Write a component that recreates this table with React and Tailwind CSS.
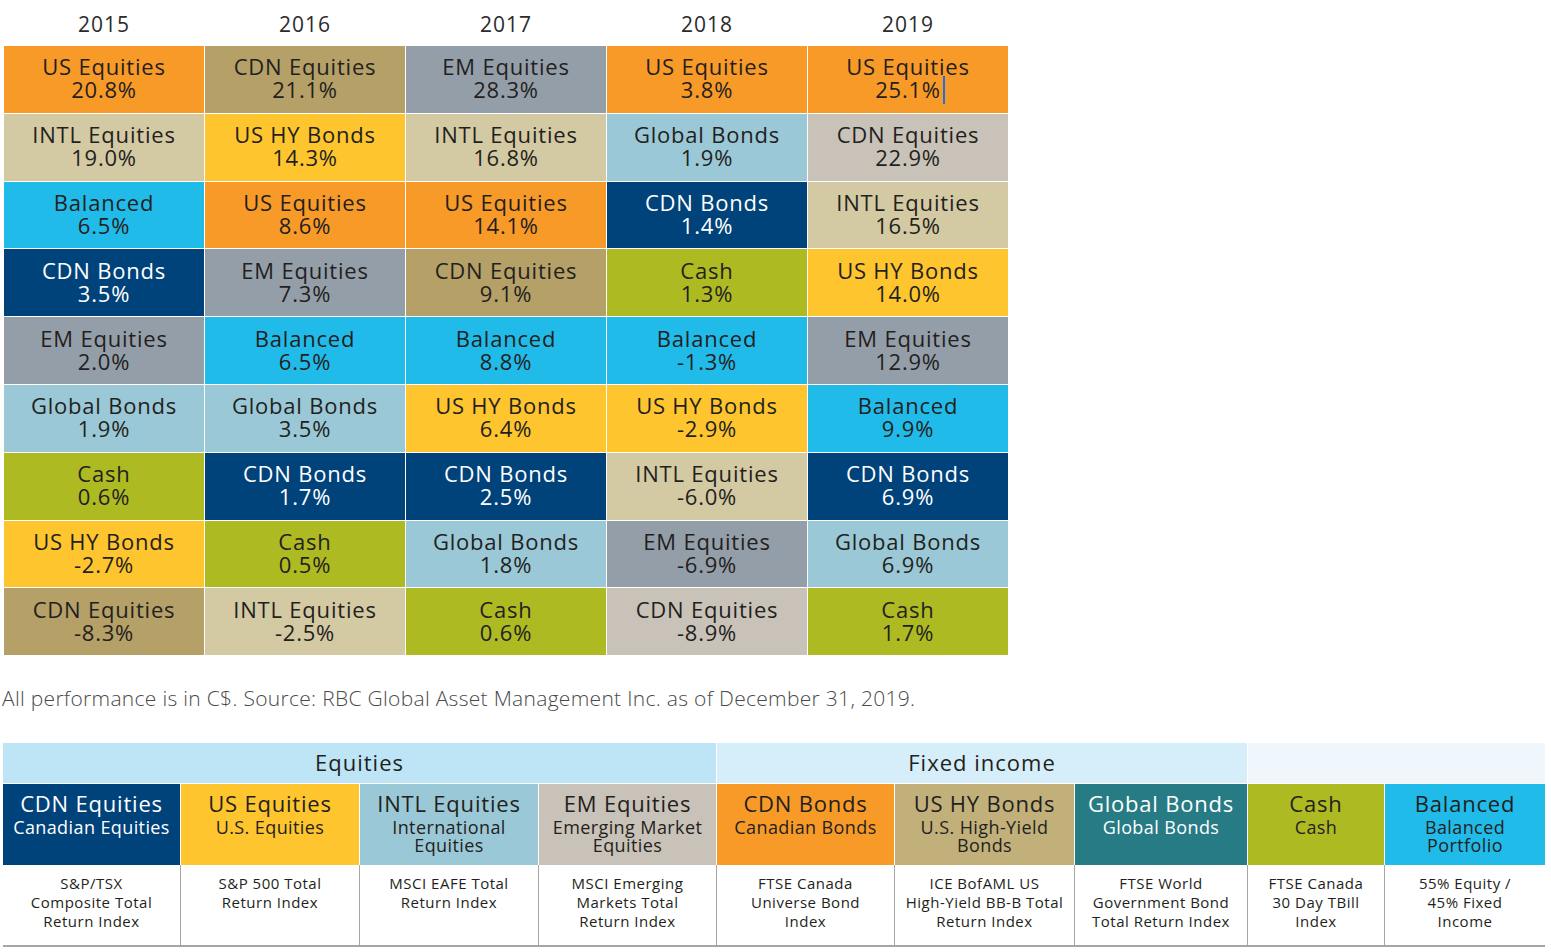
import React from "react";

const C = {
  orange: "bg-[#f89a28] text-[#231f20]",
  tan: "bg-[#b5a067] text-[#231f20]",
  gray: "bg-[#949ea8] text-[#231f20]",
  beige: "bg-[#d3c9a2] text-[#231f20]",
  lblue: "bg-[#9ac8d6] text-[#231f20]",
  cyan: "bg-[#21bbea] text-[#231f20]",
  navy: "bg-[#00427a] text-white",
  olive: "bg-[#aeba22] text-[#231f20]",
  yellow: "bg-[#fec52e] text-[#231f20]",
  greyb: "bg-[#c9c2b8] text-[#231f20]",
};

const years = ["2015", "2016", "2017", "2018", "2019"];

const cols = [
  [
    ["US Equities", "20.8%", "orange"],
    ["INTL Equities", "19.0%", "beige"],
    ["Balanced", "6.5%", "cyan"],
    ["CDN Bonds", "3.5%", "navy"],
    ["EM Equities", "2.0%", "gray"],
    ["Global Bonds", "1.9%", "lblue"],
    ["Cash", "0.6%", "olive"],
    ["US HY Bonds", "-2.7%", "yellow"],
    ["CDN Equities", "-8.3%", "tan"],
  ],
  [
    ["CDN Equities", "21.1%", "tan"],
    ["US HY Bonds", "14.3%", "yellow"],
    ["US Equities", "8.6%", "orange"],
    ["EM Equities", "7.3%", "gray"],
    ["Balanced", "6.5%", "cyan"],
    ["Global Bonds", "3.5%", "lblue"],
    ["CDN Bonds", "1.7%", "navy"],
    ["Cash", "0.5%", "olive"],
    ["INTL Equities", "-2.5%", "beige"],
  ],
  [
    ["EM Equities", "28.3%", "gray"],
    ["INTL Equities", "16.8%", "beige"],
    ["US Equities", "14.1%", "orange"],
    ["CDN Equities", "9.1%", "tan"],
    ["Balanced", "8.8%", "cyan"],
    ["US HY Bonds", "6.4%", "yellow"],
    ["CDN Bonds", "2.5%", "navy"],
    ["Global Bonds", "1.8%", "lblue"],
    ["Cash", "0.6%", "olive"],
  ],
  [
    ["US Equities", "3.8%", "orange"],
    ["Global Bonds", "1.9%", "lblue"],
    ["CDN Bonds", "1.4%", "navy"],
    ["Cash", "1.3%", "olive"],
    ["Balanced", "-1.3%", "cyan"],
    ["US HY Bonds", "-2.9%", "yellow"],
    ["INTL Equities", "-6.0%", "beige"],
    ["EM Equities", "-6.9%", "gray"],
    ["CDN Equities", "-8.9%", "greyb"],
  ],
  [
    ["US Equities", "25.1%", "orange"],
    ["CDN Equities", "22.9%", "greyb"],
    ["INTL Equities", "16.5%", "beige"],
    ["US HY Bonds", "14.0%", "yellow"],
    ["EM Equities", "12.9%", "gray"],
    ["Balanced", "9.9%", "cyan"],
    ["CDN Bonds", "6.9%", "navy"],
    ["Global Bonds", "6.9%", "lblue"],
    ["Cash", "1.7%", "olive"],
  ],
];

const legend = [
  { name: "CDN Equities", sub: ["Canadian Equities"], cls: "bg-[#00427a] text-white", desc: ["S&P/TSX", "Composite Total", "Return Index"] },
  { name: "US Equities", sub: ["U.S. Equities"], cls: "bg-[#fec52e] text-[#231f20]", desc: ["S&P 500 Total", "Return Index"] },
  { name: "INTL Equities", sub: ["International", "Equities"], cls: "bg-[#9ac8d6] text-[#231f20]", desc: ["MSCI EAFE Total", "Return Index"] },
  { name: "EM Equities", sub: ["Emerging Market", "Equities"], cls: "bg-[#c9c2b8] text-[#231f20]", desc: ["MSCI Emerging", "Markets Total", "Return Index"] },
  { name: "CDN Bonds", sub: ["Canadian Bonds"], cls: "bg-[#f89a28] text-[#231f20]", desc: ["FTSE Canada", "Universe Bond", "Index"] },
  { name: "US HY Bonds", sub: ["U.S. High-Yield", "Bonds"], cls: "bg-[#c2b07a] text-[#231f20]", desc: ["ICE BofAML US", "High-Yield BB-B Total", "Return Index"] },
  { name: "Global Bonds", sub: ["Global Bonds"], cls: "bg-[#267b84] text-white", desc: ["FTSE World", "Government Bond", "Total Return Index"] },
  { name: "Cash", sub: ["Cash"], cls: "bg-[#aeba22] text-[#231f20]", desc: ["FTSE Canada", "30 Day TBill", "Index"] },
  { name: "Balanced", sub: ["Balanced", "Portfolio"], cls: "bg-[#21bbea] text-[#231f20]", desc: ["55% Equity /", "45% Fixed", "Income"] },
];

const colTemplate = "grid-cols-[177px_178px_178px_177px_177px_179px_172px_136px_160px]";

export default function App() {
  const rows = Array.from({ length: 9 }, (_, r) => cols.map((c) => c[r]));
  return (
    <div className="w-[1551px] h-[952px] bg-white overflow-hidden" style={{ fontFamily: '"Open Sans", sans-serif' }}>
      {/* Year headers */}
      <div className="ml-[4px] w-[1004px] h-[46px] grid grid-cols-5 gap-px items-center">
        {years.map((y) => (
          <div key={y} className="text-center text-[21px] tracking-[1px] text-[#2b2b2b] pt-[3px]">
            {y}
          </div>
        ))}
      </div>
      {/* Grid */}
      <div className="ml-[4px] w-[1004px] grid grid-cols-5 auto-rows-[66.8px] gap-px bg-white">
        {rows.map((row, r) =>
          row.map(([name, pct, color], c) => (
            <div
              key={`${r}-${c}`}
              className={`${C[color]} flex flex-col items-center justify-center pb-[2px] text-[22px] leading-[23px] tracking-[0.8px]`}
            >
              <div>{name}</div>
              <div className="relative">
                {pct}
                {r === 0 && c === 4 && (
                  <span className="absolute right-[-4px] top-[-2px] w-[2px] h-[28px] bg-[#1f6fe0]" />
                )}
              </div>
            </div>
          ))
        )}
      </div>
      {/* Caption */}
      <div className="mt-[31px] ml-[2px] text-[21px] font-light tracking-[0.3px] text-[#4a4a4a] leading-[24px]">
        All performance is in C$. Source: RBC Global Asset Management Inc. as of December 31, 2019.
      </div>
      {/* Legend table */}
      <div className="mt-[33px] ml-[3px] w-[1542px]">
        <div className={`grid ${colTemplate} gap-x-px h-[40px] text-[22px] tracking-[1px] text-[#231f20]`}>
          <div className="col-span-4 bg-[#bde5f6] flex items-center justify-center pb-[2px]">Equities</div>
          <div className="col-span-3 bg-[#d6eef9] flex items-center justify-center pb-[2px]">Fixed income</div>
          <div className="col-span-2 bg-[#eff7fc]"></div>
        </div>
        <div className={`grid ${colTemplate} gap-x-px mt-px h-[81px]`}>
          {legend.map((l) => (
            <div key={l.name} className={`${l.cls} flex flex-col items-center pt-[7px] text-center`}>
              <div className="text-[22px] leading-[24px] tracking-[0.8px]">{l.name}</div>
              <div className="mt-[4px] text-[18px] leading-[17.5px] tracking-[0.4px]">
                {l.sub.map((s) => (
                  <div key={s}>{s}</div>
                ))}
              </div>
            </div>
          ))}
        </div>
        <div className={`grid ${colTemplate} gap-x-px bg-[#a6a6a6] h-[82px] border-b-2 border-[#a6a6a6]`}>
          {legend.map((l) => (
            <div key={l.name} className="bg-white flex flex-col items-center pt-[9px] text-center text-[15px] leading-[19px] tracking-[0.5px] text-[#231f20]">
              {l.desc.map((d) => (
                <div key={d}>{d}</div>
              ))}
            </div>
          ))}
        </div>
      </div>
    </div>
  );
}
